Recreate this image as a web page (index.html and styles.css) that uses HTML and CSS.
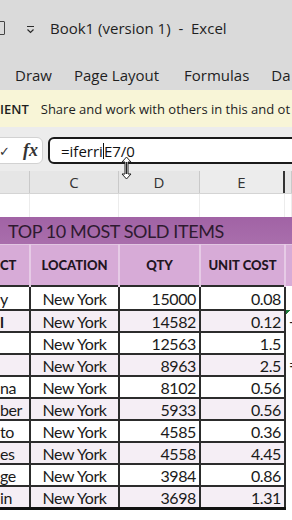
FILE: index.html
```html
<!DOCTYPE html>
<html lang="en">
<head>
  <meta charset="UTF-8" />
  <meta name="viewport" content="width=device-width, initial-scale=1.0"/>
  <title>Book1 (version 1) - Excel</title>
  <link rel="stylesheet" href="styles.css">
</head>
<body>

  <!-- Window title -->
  <header class="titlebar">
    <span class="qa-square"></span>
    <svg class="qa-more" width="9" height="9" viewBox="0 0 9 9">
      <path d="M1 1.5h7M1.5 4.5l3 3 3-3" fill="none" stroke="#2b2b2b" stroke-width="1.2"/>
    </svg>
    <span class="doc-title">Book1 (version 1)&nbsp; - &nbsp;Excel</span>
  </header>

  <!-- Ribbon tabs -->
  <nav class="tabs">
    <span>Draw</span>
    <span>Page Layout</span>
    <span>Formulas</span>
    <span>Da</span>
  </nav>

  <!-- Message bar -->
  <div class="msgbar">
    <b>IENT</b>
    <span>Share and work with others in this and ot</span>
  </div>

  <!-- Formula bar -->
  <div class="formula-area">
    <div class="fx-btn">
      <span class="check">&#10003;</span>
      <span class="fx">fx</span>
    </div>
    <div class="formula-box">=iferri<span class="caret"></span>E7/0</div>
    <svg class="resize-cursor" width="11" height="24" viewBox="0 0 11 24">
      <path d="M5.5 1 L10 6 H7 V18 H10 L5.5 23 L1 18 H4 V6 H1 Z" fill="#fff" stroke="#222" stroke-width="1"/>
      <path d="M5.5 6 V18" stroke="#222" stroke-width="1"/>
    </svg>
  </div>

  <!-- Column letters -->
  <div class="col-heads">
    <span></span><span>C</span><span>D</span><span>E</span><span></span>
  </div>
  <div class="blank-row">
    <span></span><span></span><span></span><span></span><span></span>
  </div>

  <!-- Sheet data -->
  <table class="sheet">
    <colgroup>
      <col class="c-a"><col class="c-b"><col class="c-c"><col class="c-d"><col class="c-e">
    </colgroup>
    <tr class="title-row">
      <td colspan="5">TOP 10 MOST SOLD ITEMS</td>
    </tr>
    <tr class="head-row">
      <th class="name">CT</th>
      <th>LOCATION</th>
      <th>QTY</th>
      <th>UNIT COST</th>
      <th></th>
    </tr>
    <tr class="first"><td class="name">y</td><td class="loc">New York</td><td class="num">15000</td><td class="num">0.08</td><td class="extra"></td></tr>
    <tr><td class="name"><b>l</b></td><td class="loc">New York</td><td class="num">14582</td><td class="num">0.12</td><td class="extra flag">-</td></tr>
    <tr><td class="name"></td><td class="loc">New York</td><td class="num">12563</td><td class="num">1.5</td><td class="extra"></td></tr>
    <tr><td class="name"></td><td class="loc">New York</td><td class="num">8963</td><td class="num">2.5</td><td class="extra">=</td></tr>
    <tr><td class="name">na</td><td class="loc">New York</td><td class="num">8102</td><td class="num">0.56</td><td class="extra"></td></tr>
    <tr><td class="name">ber</td><td class="loc">New York</td><td class="num">5933</td><td class="num">0.56</td><td class="extra"></td></tr>
    <tr><td class="name">to</td><td class="loc">New York</td><td class="num">4585</td><td class="num">0.36</td><td class="extra"></td></tr>
    <tr><td class="name">es</td><td class="loc">New York</td><td class="num">4558</td><td class="num">4.45</td><td class="extra"></td></tr>
    <tr><td class="name">ge</td><td class="loc">New York</td><td class="num">3984</td><td class="num">0.86</td><td class="extra"></td></tr>
    <tr class="last"><td class="name">in</td><td class="loc">New York</td><td class="num">3698</td><td class="num">1.31</td><td class="extra"></td></tr>
  </table>

</body>
</html>
```

FILE: styles.css
```css
body {
  margin: 0;
  padding: 0;
  width: 292px;
  height: 520px;
  overflow: hidden;
  background-color: #fff;
  font-family: "Open Sans", "Noto Sans", sans-serif;
  color: #222;
}

/* title bar + tabs */
.titlebar {
  height: 56px;
  background-color: #dadada;
  display: flex;
  align-items: center;
  white-space: nowrap;
}

.qa-square {
  width: 9px;
  height: 12px;
  margin-left: -6px;
  border: 1.5px solid #444;
  border-radius: 1px;
}

.qa-more {
  margin-left: 21px;
  margin-top: 2px;
}

.doc-title {
  margin-left: 15px;
  font-size: 15px;
  color: #1f1f1f;
}

.tabs {
  height: 34px;
  background-color: #dadada;
  display: flex;
  gap: 22px;
  padding-left: 15px;
  padding-top: 4px;
  box-sizing: border-box;
  align-items: center;
  font-size: 15px;
  color: #1f1f1f;
  white-space: nowrap;
  overflow: hidden;
}

.tabs span:nth-child(3) {
  margin-left: 3px;
}

/* yellow message bar */
.msgbar {
  height: 37px;
  background-color: #f8f5d7;
  display: flex;
  align-items: center;
  gap: 12px;
  font-size: 13px;
  color: #1e1e1e;
  white-space: nowrap;
  overflow: hidden;
}

.msgbar b {
  font-weight: 600;
}

/* formula bar */
.formula-area {
  position: relative;
  background-color: #ececec;
  padding: 10px 0 7px 0;
  display: flex;
  gap: 5px;
}

.fx-btn {
  width: 52px;
  height: 27px;
  margin-left: -9px;
  box-sizing: border-box;
  background-color: #fff;
  border: 1px solid #d2d2d2;
  border-radius: 6px;
  display: flex;
  align-items: center;
  justify-content: flex-end;
  gap: 13px;
  padding-right: 4px;
}

.check {
  font-size: 13px;
  color: #333;
}

.fx {
  font-family: "Liberation Serif", serif;
  font-style: italic;
  font-weight: bold;
  font-size: 18px;
  color: #333;
}

.formula-box {
  flex: 1;
  height: 27px;
  margin-right: -20px;
  box-sizing: border-box;
  background-color: #fff;
  border: 2px solid #1a1a1a;
  border-radius: 6px;
  padding-left: 11px;
  display: flex;
  align-items: center;
  font-size: 15px;
  color: #111;
  white-space: nowrap;
}

.caret {
  display: inline-block;
  width: 1px;
  height: 16px;
  background-color: #111;
}

.resize-cursor {
  position: absolute;
  left: 121px;
  top: 29px;
}

/* column letters */
.col-heads, .blank-row {
  display: grid;
  grid-template-columns: 30px 89px 81px 85px 1fr;
  height: 23px;
}

.col-heads {
  background-color: #e6e6e6;
  border-bottom: 1px solid #d4d4d4;
  box-sizing: border-box;
  font-size: 15px;
  color: #333;
}

.col-heads span {
  border-right: 1px solid #c9c9c9;
  display: flex;
  align-items: center;
  justify-content: center;
}

.col-heads span:nth-child(4) {
  background-color: #ececec;
  border-right: 2px solid #333;
}

.blank-row span {
  border-right: 1px solid #ececec;
}

/* sheet table */
.sheet {
  border-collapse: collapse;
  table-layout: fixed;
  width: 305px;
  font-family: "Lato", "Liberation Sans", sans-serif;
}

.c-a { width: 30px; }
.c-b { width: 89px; }
.c-c { width: 81px; }
.c-d { width: 85px; }
.c-e { width: 20px; }

.sheet td, .sheet th {
  padding: 0;
  white-space: nowrap;
  overflow: hidden;
}

.sheet .title-row td {
  height: 27px;
  background: linear-gradient(#a163a5, #a96eac);
  color: #2e1a30;
  font-size: 18px;
  padding-left: 8px;
  border: none;
}

.head-row th {
  height: 40px;
  background-color: #d7abd7;
  border-left: 2px solid #e6cbe6;
  border-top: 1px solid #e2c6e2;
  color: #221522;
  font-size: 13px;
  font-weight: 900;
  text-align: center;
}

.head-row th.name {
  text-align: left;
  border-left: none;
}

.sheet tr td {
  height: 20px;
  border: 2px solid #2c2c2c;
  font-size: 16px;
  letter-spacing: -0.4px;
  color: #1a1a1a;
}

.sheet tr.first td {
  height: 22px;
}

.sheet tr:nth-child(even) td {
  background-color: #f5eef5;
}

.sheet td.name {
  border-left: none;
  text-align: left;
}

.sheet td.loc {
  text-align: center;
}

.sheet td.num {
  text-align: right;
  padding-right: 3px;
}

.sheet td.extra {
  background-color: #fff;
  border-top: none;
  border-bottom: none;
  border-right: none;
  font-size: 15px;
  padding-left: 3px;
}

.sheet tr:nth-child(even) td.extra {
  background-color: #fff;
}

.sheet td.flag {
  background: linear-gradient(135deg, #1d7a3a 3px, #fff 3px);
}

.sheet tr.last td {
  border-bottom: 3px solid #111;
}

.sheet tr.last td.extra {
  border-bottom: none;
}
```
